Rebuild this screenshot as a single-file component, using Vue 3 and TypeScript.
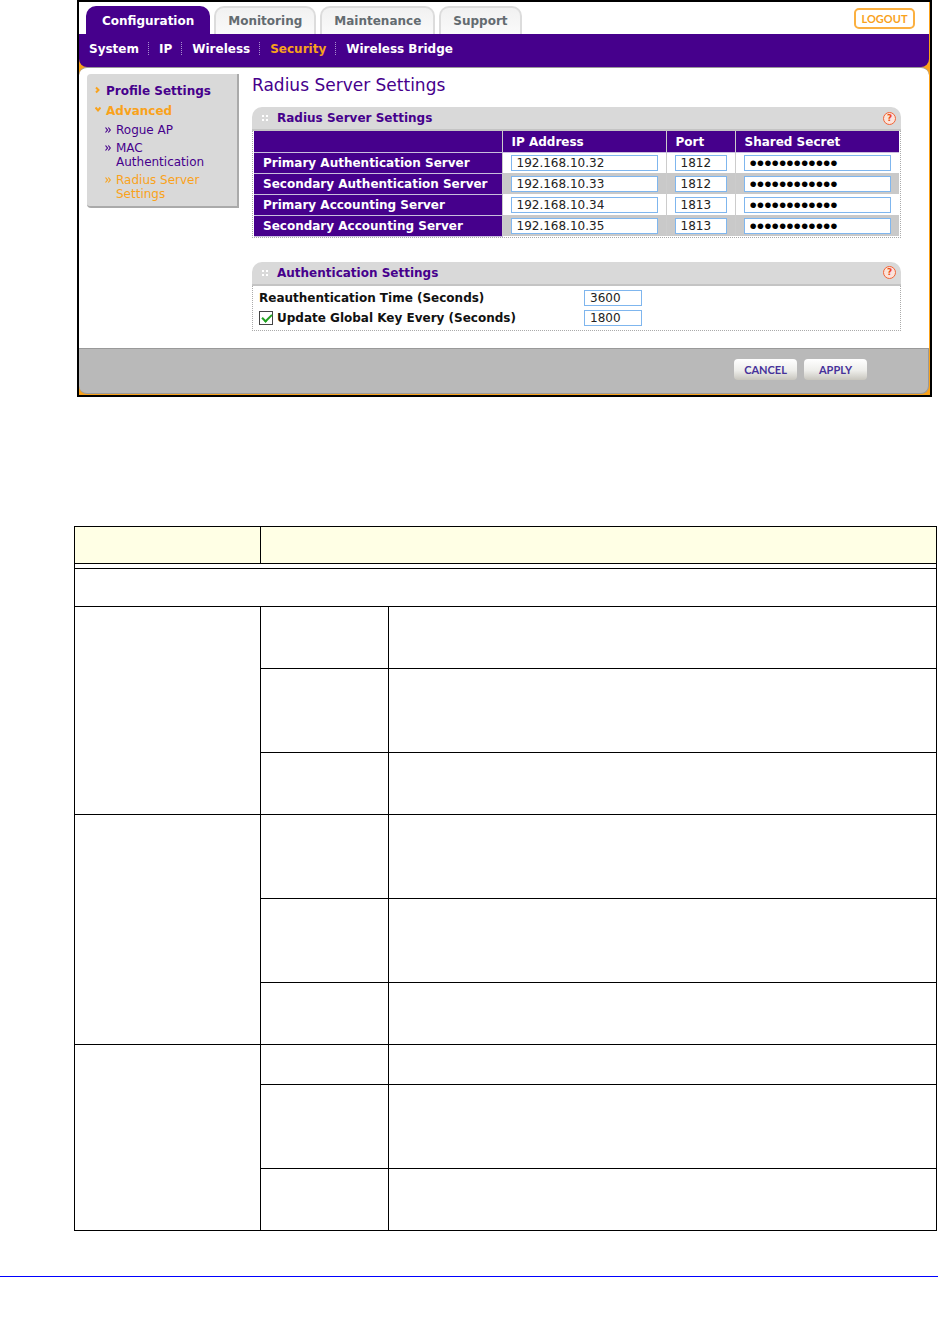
<script setup lang="ts">
import { reactive, ref } from 'vue'

interface ServerRow {
  id: string
  label: string
  ip: string
  port: string
  secret: string
}

const tabs: string[] = ['Configuration', 'Monitoring', 'Maintenance', 'Support']
const activeTab = ref('Configuration')

const sections: string[] = ['System', 'IP', 'Wireless', 'Security', 'Wireless Bridge']
const activeSection = ref('Security')

const servers = reactive<ServerRow[]>([
  { id: 'pauth', label: 'Primary Authentication Server', ip: '192.168.10.32', port: '1812', secret: 'sharedsecret' },
  { id: 'sauth', label: 'Secondary Authentication Server', ip: '192.168.10.33', port: '1812', secret: 'sharedsecret' },
  { id: 'pacct', label: 'Primary Accounting Server', ip: '192.168.10.34', port: '1813', secret: 'sharedsecret' },
  { id: 'sacct', label: 'Secondary Accounting Server', ip: '192.168.10.35', port: '1813', secret: 'sharedsecret' },
])

const reauthTime = ref('3600')
const updateKey = ref(true)
const keyInterval = ref('1800')

const groups: string[][] = [
  ['h62', 'h84', 'h62'],
  ['h84', 'h84', 'h62'],
  ['h40', 'h84', 'h62'],
]
</script>

<template>
  <main class="page">
    <div class="frame">
      <header class="top">
        <div class="tabs">
          <button
            v-for="tab in tabs"
            :key="tab"
            type="button"
            class="tab"
            :class="{ active: tab === activeTab }"
            @click="activeTab = tab"
          >{{ tab }}</button>
        </div>
        <button type="button" class="logout">LOGOUT</button>
      </header>

      <nav class="nav">
        <a
          v-for="s in sections"
          :key="s"
          href="#"
          :class="{ current: s === activeSection }"
          @click.prevent="activeSection = s"
        >{{ s }}</a>
      </nav>

      <div class="content">
        <aside class="side">
          <a href="#" class="item major">
            <svg width="6" height="8" viewBox="0 0 6 8"><path d="M1 1.500l2.500 2.500-2.500 2.500" /></svg>
            <span>Profile Settings</span>
          </a>
          <a href="#" class="item major on">
            <svg width="6" height="8" viewBox="0 0 6 8"><path d="M0.500 1.500l2.500 3 2.500-3" /></svg>
            <span>Advanced</span>
          </a>
          <a href="#" class="item minor">
            <svg width="6" height="8" viewBox="0 0 6 8"><path d="M0.500 1.500l2 2.500-2 2.500M3.300 1.500l2 2.500-2 2.500" /></svg>
            <span>Rogue AP</span>
          </a>
          <a href="#" class="item minor">
            <svg width="6" height="8" viewBox="0 0 6 8"><path d="M0.500 1.500l2 2.500-2 2.500M3.300 1.500l2 2.500-2 2.500" /></svg>
            <span>MAC Authentication</span>
          </a>
          <a href="#" class="item minor on">
            <svg width="6" height="8" viewBox="0 0 6 8"><path d="M0.500 1.500l2 2.500-2 2.500M3.300 1.500l2 2.500-2 2.500" /></svg>
            <span>Radius Server Settings</span>
          </a>
        </aside>

        <div class="main">
          <h1>Radius Server Settings</h1>

          <section class="panel">
            <div class="panel-head">
              <svg class="grip" width="8" height="8" viewBox="0 0 8 8"><path d="M1 1h2v2H1zM5 1h2v2H5zM1 5h2v2H1zM5 5h2v2H5z" /></svg>
              <h2>Radius Server Settings</h2>
              <button type="button" class="help" aria-label="Help">?</button>
            </div>
            <div class="panel-body">
              <table class="servers">
                <colgroup>
                  <col class="c-name"><col class="c-ip"><col class="c-port"><col class="c-secret">
                </colgroup>
                <thead>
                  <tr><th></th><th>IP Address</th><th>Port</th><th>Shared Secret</th></tr>
                </thead>
                <tbody>
                  <tr v-for="s in servers" :key="s.id">
                    <th scope="row">{{ s.label }}</th>
                    <td><input v-model="s.ip" type="text" :aria-label="s.label + ' IP Address'"></td>
                    <td><input v-model="s.port" type="text" :aria-label="s.label + ' Port'"></td>
                    <td><input v-model="s.secret" type="password" :aria-label="s.label + ' Shared Secret'"></td>
                  </tr>
                </tbody>
              </table>
            </div>
          </section>

          <section class="panel">
            <div class="panel-head">
              <svg class="grip" width="8" height="8" viewBox="0 0 8 8"><path d="M1 1h2v2H1zM5 1h2v2H5zM1 5h2v2H1zM5 5h2v2H5z" /></svg>
              <h2>Authentication Settings</h2>
              <button type="button" class="help" aria-label="Help">?</button>
            </div>
            <div class="panel-body form">
              <div class="row">
                <label for="reauth">Reauthentication Time (Seconds)</label>
                <input id="reauth" v-model="reauthTime" type="text">
              </div>
              <div class="row">
                <label class="check"><input v-model="updateKey" type="checkbox">Update Global Key Every (Seconds)</label>
                <input v-model="keyInterval" type="text" aria-label="Update Global Key Every (Seconds)">
              </div>
            </div>
          </section>
        </div>
      </div>

      <footer class="actions">
        <button type="button">CANCEL</button>
        <button type="button">APPLY</button>
      </footer>
    </div>

    <table class="fields">
      <colgroup>
        <col class="f-a"><col class="f-b"><col>
      </colgroup>
      <thead>
        <tr class="h37"><th></th><th colspan="2"></th></tr>
      </thead>
      <tbody>
        <tr class="h5"><td colspan="3"></td></tr>
        <tr class="h38"><td colspan="3"></td></tr>
        <template v-for="(g, gi) in groups" :key="gi">
          <tr v-for="(h, ri) in g" :key="ri" :class="h">
            <td v-if="ri === 0" :rowspan="g.length"></td>
            <td></td>
            <td></td>
          </tr>
        </template>
      </tbody>
    </table>
    <hr class="rule">
  </main>
</template>

<style>
body {
  margin: 0;
  background: #fff;
}
</style>

<style scoped>
* {
  box-sizing: border-box;
}
.page {
  padding-bottom: 67px;
  font-family: "DejaVu Sans", Verdana, sans-serif;
  font-size: 12px;
  color: #222;
}
button,
input {
  font-family: inherit;
  margin: 0;
}
a {
  text-decoration: none;
}
.frame {
  margin: 0 9px 129px 77px;
  padding-right: 1px;
  border: 2px solid #000;
  background: #f9a21b;
}
.top {
  display: flex;
  justify-content: space-between;
  align-items: flex-end;
  height: 32px;
  padding: 0 14px 0 7px;
  background: #fff;
}
.tabs {
  display: flex;
  gap: 4px;
}
.tab {
  height: 28px;
  padding: 0 12px;
  border: 2px solid #dcdcdc;
  border-bottom: 0;
  border-radius: 10px 10px 0 0;
  background: linear-gradient(#f1f1f1, #fafafa);
  color: #636b70;
  font-size: 12px;
  font-weight: bold;
}
.tab.active {
  padding: 0 14px;
  border-color: #46008c;
  background: #46008c;
  color: #fff;
}
.logout {
  align-self: center;
  width: 61px;
  height: 21px;
  padding: 0;
  border: 2px solid #fbb040;
  border-radius: 5px;
  background: #fff;
  color: #f9a21b;
  font-family: Lato, sans-serif;
  font-size: 11px;
  font-weight: bold;
}
.nav {
  display: flex;
  align-items: flex-start;
  height: 33px;
  padding: 8px 10px;
  border-radius: 0 0 8px 8px;
  background: #46008c;
}
.nav a {
  color: #fff;
  font-weight: bold;
  line-height: 14px;
}
.nav a + a {
  margin-left: 9px;
  padding-left: 11px;
  background: linear-gradient(#a98fd0 50%, transparent 50%) 0 0 / 1px 2px repeat-y;
}
.nav a.current {
  color: #f9a21b;
}
.content {
  display: flex;
  align-items: flex-start;
  gap: 13px;
  height: 281px;
  padding: 6px 28px 0 8px;
  border-top: 1px solid #999;
  border-radius: 8px 8px 0 0;
  background: #fff;
}
.side {
  flex: none;
  width: 152px;
  padding: 9px 8px 1px;
  border-right: 2px solid #aaa;
  border-bottom: 2px solid #aaa;
  border-radius: 4px 0 0 4px;
  background: #d9d9d9;
}
.item {
  display: flex;
  align-items: flex-start;
  gap: 5px;
  color: #46008c;
}
.item svg {
  flex: none;
  margin-top: 3px;
  fill: none;
  stroke: currentColor;
  stroke-width: 1.2;
}
.major {
  padding-bottom: 4px;
  font-weight: bold;
  line-height: 16px;
}
.major svg {
  stroke: #f9a21b;
  stroke-width: 2;
}
.minor {
  padding: 0 20px 4px 10px;
  line-height: 14px;
}
.item.on {
  color: #f9a21b;
}
.main {
  flex: 1;
  min-width: 0;
}
h1 {
  margin: 0 0 11px;
  color: #46008c;
  font-size: 17px;
  font-weight: normal;
  line-height: 22px;
}
.panel + .panel {
  margin-top: 24px;
}
.panel-head {
  display: flex;
  align-items: center;
  height: 24px;
  padding: 0 5px 0 9px;
  border-bottom: 2px solid #c4c4c4;
  border-radius: 10px 10px 0 0;
  background: #d9d9d9;
}
.grip {
  fill: #fff;
}
h2 {
  flex: 1;
  margin: 0 0 0 8px;
  color: #46008c;
  font-size: 12px;
}
.help {
  width: 13px;
  height: 13px;
  padding: 0;
  border: 1px solid #f26336;
  border-radius: 50%;
  background: #fbe3da;
  color: #f04a1c;
  font-size: 9px;
  font-weight: bold;
  line-height: 11px;
}
.panel-body {
  padding: 0 1px;
  border: 1px dotted #aaa;
  border-top: 0;
}
.servers {
  width: 100%;
  border-collapse: collapse;
  table-layout: fixed;
}
.c-name {
  width: 248px;
}
.c-port {
  width: 69px;
}
.servers th {
  height: 21px;
  padding: 1px 9px 0;
  border-bottom: 1px solid #c9bedd;
  background: #46008c;
  color: #fff;
  font-size: 12px;
  text-align: left;
  white-space: nowrap;
}
.servers th + th,
.servers td {
  border-left: 1px solid #ccc;
}
.servers td {
  height: 21px;
  padding: 0 8px;
}
.servers tbody tr:nth-child(even) {
  background: #c9c9c9;
}
input[type="text"],
input[type="password"] {
  display: block;
  width: 100%;
  height: 16px;
  padding: 0 5px;
  border: 1px solid #7fb6ee;
  border-radius: 0;
  outline: 0;
  background: #fff;
  color: #222;
  font-size: 12px;
}
input[type="password"] {
  color: #000;
  font-family: "Liberation Sans", Arial, sans-serif;
  font-size: 21px;
}
.form {
  padding: 2px 6px;
}
.row {
  display: flex;
  align-items: center;
  height: 20px;
}
.row label {
  width: 325px;
  color: #111;
  font-weight: bold;
  white-space: nowrap;
}
.row input[type="text"] {
  width: 58px;
}
.check {
  display: flex;
  align-items: center;
  gap: 4px;
}
input[type="checkbox"] {
  appearance: none;
  width: 14px;
  height: 14px;
  border: 1px solid #444;
  background: #fff;
}
input[type="checkbox"]:checked::before {
  content: "";
  display: block;
  width: 8px;
  height: 4px;
  margin: 2px;
  border: solid #21a121;
  border-width: 0 0 2px 2px;
  transform: rotate(-45deg);
}
.actions {
  display: flex;
  justify-content: flex-end;
  gap: 7px;
  height: 46px;
  margin-bottom: 1px;
  padding: 10px 61px 0;
  border: solid #999;
  border-width: 1px 1px 1px 0;
  border-radius: 0 0 8px 8px;
  background: #b9b9b9;
}
.actions button {
  width: 63px;
  height: 21px;
  padding: 0;
  border: 0;
  border-radius: 4px;
  background: linear-gradient(#fff, #ededea 55%, #c8c6be);
  color: #46319a;
  font-family: Lato, sans-serif;
  font-size: 11px;
  font-weight: bold;
}
.fields {
  width: calc(100% - 78px);
  margin: 0 4px 45px 74px;
  border-collapse: collapse;
  table-layout: fixed;
}
.fields th,
.fields td {
  padding: 0;
  border: 1px solid #000;
}
.fields th {
  background: #ffffe5;
}
.f-a {
  width: 186px;
}
.f-b {
  width: 128px;
}
.h5 { height: 5px; }
.h37 { height: 37px; }
.h38 { height: 38px; }
.h40 { height: 40px; }
.h62 { height: 62px; }
.h84 { height: 84px; }
.rule {
  height: 1px;
  margin: 0 3px 0 0;
  border: 0;
  background: #0000ff;
}
</style>
